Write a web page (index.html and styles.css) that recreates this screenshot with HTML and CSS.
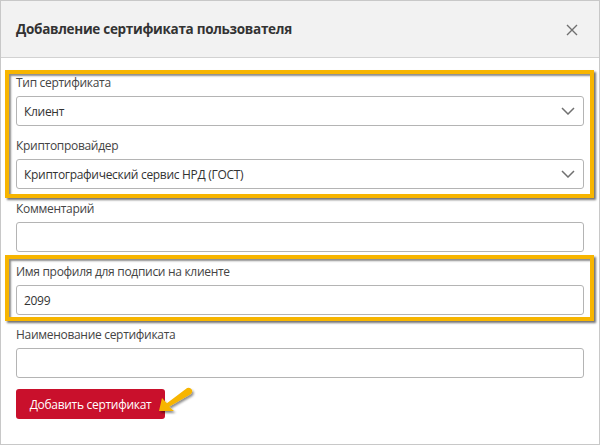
FILE: index.html
```html
<!DOCTYPE html>
<html lang="ru">
<head>
<meta charset="utf-8">
<link rel="stylesheet" href="styles.css">
</head>
<body>
<div class="modal">
  <div class="modal-header">
    <h1 class="modal-title">Добавление сертификата пользователя</h1>
    <svg class="close" width="12" height="12" viewBox="0 0 12 12"><path d="M1 1L11 11M11 1L1 11" stroke="#707070" stroke-width="1.4" fill="none"/></svg>
  </div>
  <div class="modal-body">
    <div class="field">
      <div class="label">Тип сертификата</div>
      <div class="control select"><span>Клиент</span>
        <svg class="chev" width="14" height="8" viewBox="0 0 14 8"><path d="M1 1L7 7L13 1" stroke="#707070" stroke-width="1.5" fill="none"/></svg>
      </div>
    </div>
    <div class="field">
      <div class="label">Криптопровайдер</div>
      <div class="control select"><span>Криптографический сервис НРД (ГОСТ)</span>
        <svg class="chev" width="14" height="8" viewBox="0 0 14 8"><path d="M1 1L7 7L13 1" stroke="#707070" stroke-width="1.5" fill="none"/></svg>
      </div>
    </div>
    <div class="field">
      <div class="label">Комментарий</div>
      <div class="control"></div>
    </div>
    <div class="field">
      <div class="label">Имя профиля для подписи на клиенте</div>
      <div class="control"><span>2099</span></div>
    </div>
    <div class="field">
      <div class="label">Наименование сертификата</div>
      <div class="control"></div>
    </div>
    <button class="btn">Добавить сертификат</button>
  </div>
  <div class="hl hl-1"></div>
  <div class="hl hl-2"></div>
  <svg class="arrow" width="50" height="40" viewBox="0 0 50 40">
    <defs>
      <filter id="sh" x="-30%" y="-30%" width="160%" height="160%">
        <feDropShadow dx="1.5" dy="2" stdDeviation="1.2" flood-color="#000" flood-opacity="0.45"/>
      </filter>
    </defs>
    <g filter="url(#sh)">
      <path d="M8 27 L11 14 L15.9 19.3 L36.1 4.1 A3.5 3.5 0 0 1 39.9 9.9 L18.1 22.7 L23 27 Z" fill="#f7b500"/>
    </g>
  </svg>
</div>
</body>
</html>
```
FILE: styles.css
```css
* { box-sizing: border-box; }
html, body { margin: 0; padding: 0; background: #ffffff; }
body {
  font-family: "Open Sans", "Noto Sans", "Liberation Sans", sans-serif;
  color: #333333;
  width: 600px;
  height: 446px;
  overflow: hidden;
}
.modal {
  position: relative;
  width: 600px;
  height: 445px;
  border: 1px solid #c8c8c8;
  background: #ffffff;
}
.modal-header {
  height: 57px;
  background: #f2f2f2;
  border-bottom: 1px solid #d2d2d2;
  display: flex;
  align-items: center;
  justify-content: space-between;
  padding: 0 21px 0 15px;
}
.modal-title {
  margin: 0;
  font-size: 13.5px;
  font-weight: 700;
  color: #333333;
  letter-spacing: -0.3px;
}
.close { display: block; margin-top: 1px; }
.modal-body {
  padding: 16px 15px 0 15px;
}
.field { margin-bottom: 11px; }
.label {
  font-size: 12px;
  letter-spacing: -0.3px;
  line-height: 18px;
  margin-bottom: 4px;
  color: #444444;
}
.control {
  height: 30px;
  border: 1px solid #b4b4b4;
  border-radius: 3px;
  display: flex;
  align-items: center;
  justify-content: space-between;
  padding: 0 8px 0 7px;
  font-size: 12px;
  letter-spacing: -0.3px;
  color: #333333;
}
.chev { display: block; }
.btn {
  display: block;
  height: 30px;
  width: 149px;
  border: none;
  border-radius: 3px;
  background: #c9102c;
  color: #ffffff;
  font-family: inherit;
  font-size: 12px;
  letter-spacing: -0.3px;
  padding: 0;
}
.hl {
  position: absolute;
  left: 4px;
  width: 589px;
  border: 4px solid #f7b500;
  box-shadow: 2px 2px 2px rgba(0,0,0,0.55), inset 2px 2px 2px rgba(0,0,0,0.45);
}
.hl-1 { top: 69px; height: 128px; }
.hl-2 { top: 254px; height: 66px; }
.arrow {
  position: absolute;
  left: 150px;
  top: 383px;
}
```
